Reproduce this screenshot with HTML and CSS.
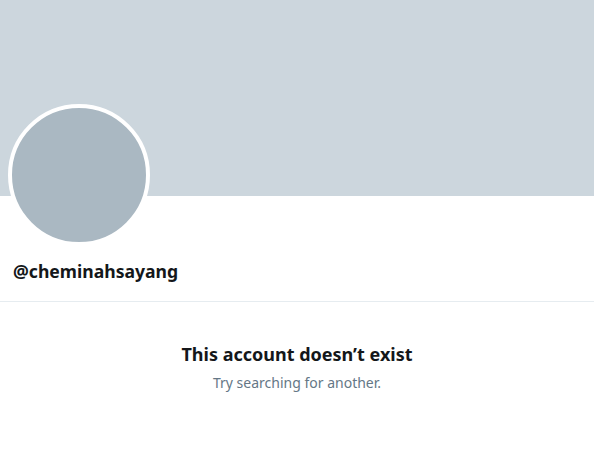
FILE: index.html
```html
<!DOCTYPE html>
<html>
<head>
<meta charset="utf-8">
<link rel="stylesheet" href="styles.css">
</head>
<body>
<div class="page">
  <div class="banner"></div>
  <div class="profile">
    <div class="avatar"></div>
    <div class="handle">@cheminahsayang</div>
  </div>
  <div class="empty">
    <div class="title">This account doesn’t exist</div>
    <div class="sub">Try searching for another.</div>
  </div>
</div>
</body>
</html>
```
FILE: styles.css
```css
html, body {
  margin: 0;
  padding: 0;
  background: #ffffff;
}
body {
  font-family: "Noto Sans", "Open Sans", sans-serif;
  color: #14171a;
}
.page {
  width: 594px;
}
.banner {
  height: 196px;
  background: #ccd6dd;
}
.profile {
  display: flow-root;
  padding: 0 0 0 8px;
  border-bottom: 1px solid #e6ecf0;
  height: 106px;
  box-sizing: border-box;
}
.avatar {
  width: 134px;
  height: 134px;
  border: 4px solid #ffffff;
  border-radius: 50%;
  background: #aab8c2;
  margin-top: -92px;
}
.handle {
  margin-top: 13px;
  padding-left: 5px;
  font-weight: 700;
  font-size: 17.6px;
  line-height: 24px;
}
.empty {
  display: flex;
  flex-direction: column;
  align-items: center;
  padding-top: 40px;
}
.title {
  font-weight: 700;
  font-size: 18px;
  line-height: 24px;
}
.sub {
  margin-top: 8px;
  font-size: 14px;
  line-height: 18px;
  color: #657786;
}
```
